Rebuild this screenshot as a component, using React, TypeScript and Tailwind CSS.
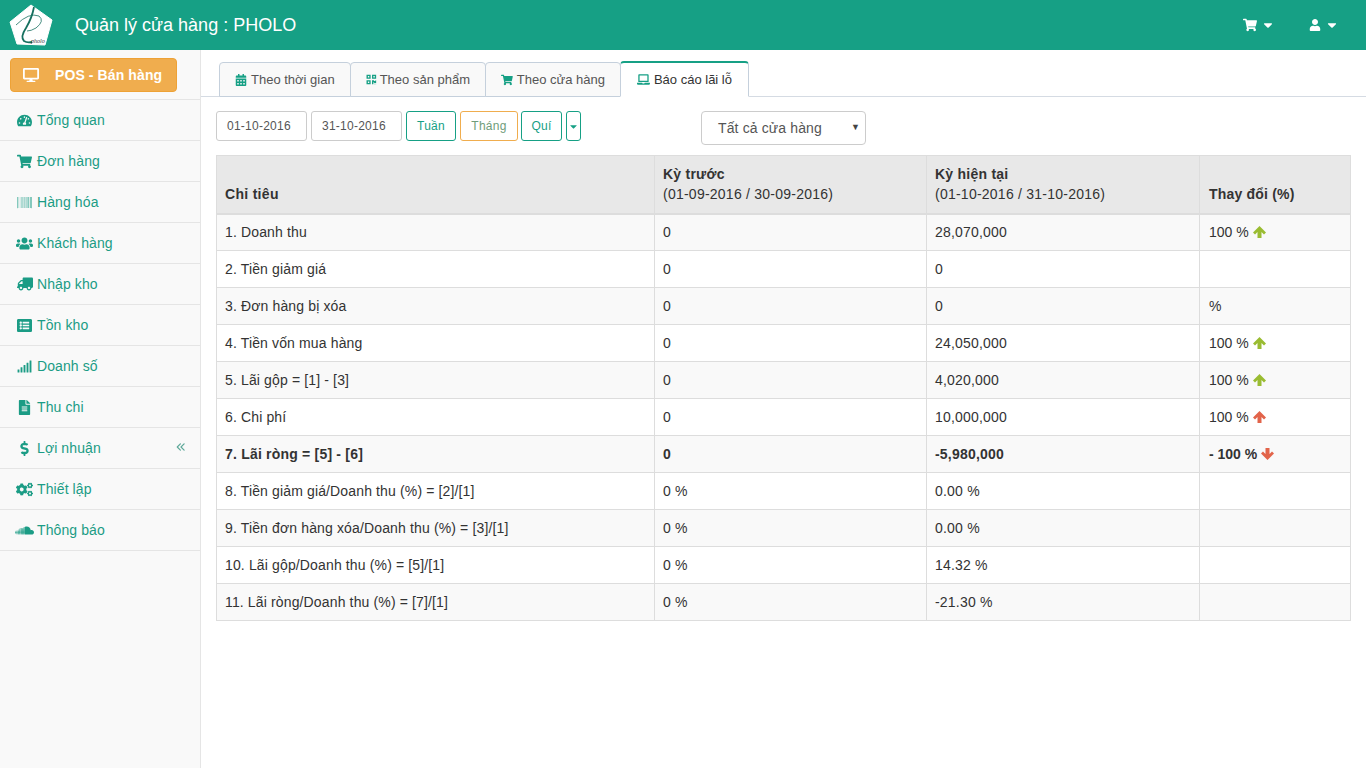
import type { ReactNode } from "react";
import {
  FaBarcode,
  FaCalendarAlt,
  FaCaretDown,
  FaCogs,
  FaDesktop,
  FaFileAlt,
  FaDollarSign,
  FaLaptop,
  FaListAlt,
  FaQrcode,
  FaShoppingCart,
  FaSignal,
  FaSoundcloud,
  FaTachometerAlt,
  FaTruck,
  FaUser,
  FaUsers,
} from "react-icons/fa";
import { FaAnglesLeft } from "react-icons/fa6";

const menu = [
  { label: "Tổng quan", icon: <FaTachometerAlt /> },
  { label: "Đơn hàng", icon: <FaShoppingCart /> },
  { label: "Hàng hóa", icon: <FaBarcode className="opacity-70" /> },
  { label: "Khách hàng", icon: <FaUsers className="text-[17px]" /> },
  { label: "Nhập kho", icon: <FaTruck className="-scale-x-100 text-[16px]" /> },
  { label: "Tồn kho", icon: <FaListAlt /> },
  { label: "Doanh số", icon: <FaSignal /> },
  { label: "Thu chi", icon: <FaFileAlt /> },
  { label: "Lợi nhuận", icon: <FaDollarSign />, more: true },
  { label: "Thiết lập", icon: <FaCogs className="text-[17px]" /> },
  { label: "Thông báo", icon: <FaSoundcloud className="text-[19px]" /> },
];

// thick FA4 style arrow, the package one comes out too thin at this size
const Arrow = ({ color, down }: { color: string; down?: boolean }) => (
  <svg width="13" height="12" viewBox="0 0 13 12" className={`inline-block -mt-[2px] ${color} ${down ? "rotate-180" : ""}`}>
    <path d="M6.5 0 L13 6.5 L11 8.5 L8.5 6 V12 H4.5 V6 L2 8.5 L0 6.5 Z" fill="currentColor" />
  </svg>
);

const up = <Arrow color="text-[#9abc32]" />;
const upRed = <Arrow color="text-[#e2644a]" />;
const downRed = <Arrow color="text-[#e2644a]" down />;

type Row = { a: string; b: string; c: string; d?: ReactNode; bold?: boolean };

const rows: Row[] = [
  { a: "1. Doanh thu", b: "0", c: "28,070,000", d: <>100 % {up}</> },
  { a: "2. Tiền giảm giá", b: "0", c: "0" },
  { a: "3. Đơn hàng bị xóa", b: "0", c: "0", d: "%" },
  { a: "4. Tiền vốn mua hàng", b: "0", c: "24,050,000", d: <>100 % {up}</> },
  { a: "5. Lãi gộp = [1] - [3]", b: "0", c: "4,020,000", d: <>100 % {up}</> },
  { a: "6. Chi phí", b: "0", c: "10,000,000", d: <>100 % {upRed}</> },
  { a: "7. Lãi ròng = [5] - [6]", b: "0", c: "-5,980,000", d: <>- 100 % {downRed}</>, bold: true },
  { a: "8. Tiền giảm giá/Doanh thu (%) = [2]/[1]", b: "0 %", c: "0.00 %" },
  { a: "9. Tiền đơn hàng xóa/Doanh thu (%) = [3]/[1]", b: "0 %", c: "0.00 %" },
  { a: "10. Lãi gộp/Doanh thu (%) = [5]/[1]", b: "0 %", c: "14.32 %" },
  { a: "11. Lãi ròng/Doanh thu (%) = [7]/[1]", b: "0 %", c: "-21.30 %" },
];

const Logo = () => (
  <svg width="44" height="42" viewBox="0 0 44 42" className="shrink-0">
    <path d="M22 1 L43 16 L36 41 L8 40 L1 18 Z" fill="#fff" stroke="#fff" strokeLinejoin="round" />
    <path d="M25 3 Q23 14 17 24 Q11 33 15 37 Q18 39 23 38" fill="none" stroke="#16705f" strokeWidth="1.8" />
    <path d="M7 21 Q20 8 30 12 Q36 17 27 24 Q22 27 18 27" fill="none" stroke="#16705f" strokeWidth="0.8" />
    <text x="22" y="39" fontSize="6" fontStyle="italic" fill="#333" fontFamily="Liberation Serif, serif">pholo</text>
  </svg>
);

const App = () => {
  return (
    <div className="w-full h-screen flex flex-col overflow-hidden bg-white text-[14px] text-[#333] font-['Liberation_Sans',Arial,sans-serif]">
      <header className="h-[50px] shrink-0 bg-[#16a085] flex items-center text-white">
        <div className="pl-[9px] pt-[4px] self-start">
          <Logo />
        </div>
        <div className="ml-[22px] text-[18px] flex-1">Quản lý cửa hàng : PHOLO</div>
        <div className="flex items-center gap-1 text-[14px] mr-[34px]">
          <FaShoppingCart />
          <FaCaretDown className="text-[14px]" />
        </div>
        <div className="flex items-center gap-1 text-[13px] mr-[27px]">
          <FaUser className="text-[12px]" />
          <FaCaretDown className="text-[14px]" />
        </div>
      </header>

      <div className="flex flex-1 min-h-0">
        <aside className="w-[201px] shrink-0 bg-[#f9f9f9] border-r border-[#e5e5e5]">
          <div className="h-[50px] px-[10px] pt-[8px] border-b border-[#e5e5e5]">
            <button className="w-[167px] h-[34px] bg-[#f0ad4e] border border-[#eea236] rounded-[4px] text-white font-bold tracking-[0.1px] flex items-center pl-[12px]">
              <FaDesktop className="text-[16px] mr-[16px]" />
              POS - Bán hàng
            </button>
          </div>
          {menu.map((item) => (
            <div
              key={item.label}
              className="h-[41px] flex items-center border-b border-[#e5e5e5] text-[#1b9c85] tracking-[0.1px] relative"
            >
              <span className="w-[37px] pl-[15px] flex justify-center text-[15px] shrink-0 pr-[3px]">{item.icon}</span>
              <span>{item.label}</span>
              {item.more && <FaAnglesLeft className="absolute right-[14px] top-[14px] text-[10px] text-[#5fa99a]" />}
            </div>
          ))}
        </aside>

        <main className="flex-1 min-w-0">
          <div className="h-[47px] pl-[18px] flex items-end border-b border-[#d5dbe3] text-[13px] text-[#555] whitespace-nowrap">
            <div className="h-[35px] mb-[-1px] px-[15px] flex items-center gap-[4px] bg-[#f9f9f9] border border-[#c5d0dc] rounded-t-[4px] w-[132px]">
              <FaCalendarAlt className="text-[#16a085] text-[12px]" /> Theo thời gian
            </div>
            <div className="h-[35px] mb-[-1px] -ml-px px-[15px] flex items-center gap-[3px] bg-[#f9f9f9] border border-[#c5d0dc] rounded-t-[4px] w-[136px]">
              <FaQrcode className="text-[#16a085] text-[11px]" /> Theo sản phẩm
            </div>
            <div className="h-[35px] mb-[-1px] -ml-px px-[15px] flex items-center gap-[4px] bg-[#f9f9f9] border border-[#c5d0dc] rounded-t-[4px] w-[136px]">
              <FaShoppingCart className="text-[#16a085] text-[12px]" /> Theo cửa hàng
            </div>
            <div className="h-[36px] mb-[-1px] -ml-px px-[16px] flex items-center gap-[4px] bg-white border border-[#c5d0dc] border-t-[2px] border-t-[#16a085] border-b-white rounded-t-[4px] w-[129px] text-[#333]">
              <FaLaptop className="text-[#16a085] text-[13px]" /> Báo cáo lãi lỗ
            </div>
          </div>

          <div className="pl-[15px] pr-[15px]">
            <div className="h-[58px] pt-[14px] flex items-start text-[12px] tracking-[0.25px]">
              <div className="w-[91px] h-[30px] border border-[#ccc] rounded-[3px] flex items-center pl-[10px] text-[#555]">01-10-2016</div>
              <div className="w-[91px] h-[30px] ml-[4px] border border-[#ccc] rounded-[3px] flex items-center pl-[10px] text-[#555]">31-10-2016</div>
              <button className="w-[50px] h-[30px] ml-[4px] border border-[#16a085] rounded-[3px] text-[#16a085]">Tuần</button>
              <button className="w-[58px] h-[30px] ml-[4px] border border-[#f0ad4e] rounded-[3px] text-[#6f9d7a]">Tháng</button>
              <button className="w-[41px] h-[30px] ml-[3px] border border-[#16a085] rounded-[3px] text-[#16a085]">Quí</button>
              <button className="w-[15px] h-[30px] ml-[4px] border border-[#16a085] rounded-[3px] text-[#16a085] flex items-center justify-center">
                <FaCaretDown className="text-[11px]" />
              </button>
              <div className="w-[165px] h-[34px] ml-[120px] border border-[#ccc] rounded-[4px] flex items-center justify-between pl-[16px] pr-[5px] text-[14px] text-[#555] tracking-[0.13px]">
                Tất cả cửa hàng
                <span className="text-[9px] text-[#444]">▼</span>
              </div>
            </div>

            <table className="w-[1134px] table-fixed border-collapse border border-[#ddd] tracking-[0.14px]">
              <colgroup>
                <col className="w-[438px]" />
                <col className="w-[272px]" />
                <col className="w-[273px]" />
                <col className="w-[151px]" />
              </colgroup>
              <thead>
                <tr className="h-[58px] bg-[#e8e8e8] text-left align-bottom">
                  <th className="border border-[#ddd] border-b-2 px-2 pb-[8px] font-bold tracking-[0.3px]">Chỉ tiêu</th>
                  <th className="border border-[#ddd] border-b-2 px-2 pb-[9px] font-normal leading-5 tracking-[0.24px]">
                    <b>Kỳ trước</b>
                    <br />
                    (01-09-2016 / 30-09-2016)
                  </th>
                  <th className="border border-[#ddd] border-b-2 px-2 pb-[9px] font-normal leading-5 tracking-[0.24px]">
                    <b>Kỳ hiện tại</b>
                    <br />
                    (01-10-2016 / 31-10-2016)
                  </th>
                  <th className="border border-[#ddd] border-b-2 pl-[9px] pr-2 pb-[8px] font-bold tracking-[0.2px]">Thay đổi (%)</th>
                </tr>
              </thead>
              <tbody>
                {rows.map((row, i) => (
                  <tr key={row.a} className={`h-[37px] ${i % 2 === 0 ? "bg-[#f9f9f9]" : "bg-white"} ${row.bold ? "font-bold tracking-[0.2px]" : ""}`}>
                    <td className="border border-[#ddd] px-2">{row.a}</td>
                    <td className="border border-[#ddd] px-2">{row.b}</td>
                    <td className="border border-[#ddd] px-2 tracking-[0.2px]">{row.c}</td>
                    <td className="border border-[#ddd] pl-[9px] pr-2 tracking-normal">{row.d}</td>
                  </tr>
                ))}
              </tbody>
            </table>
          </div>
        </main>
      </div>
    </div>
  );
};

export default App;
